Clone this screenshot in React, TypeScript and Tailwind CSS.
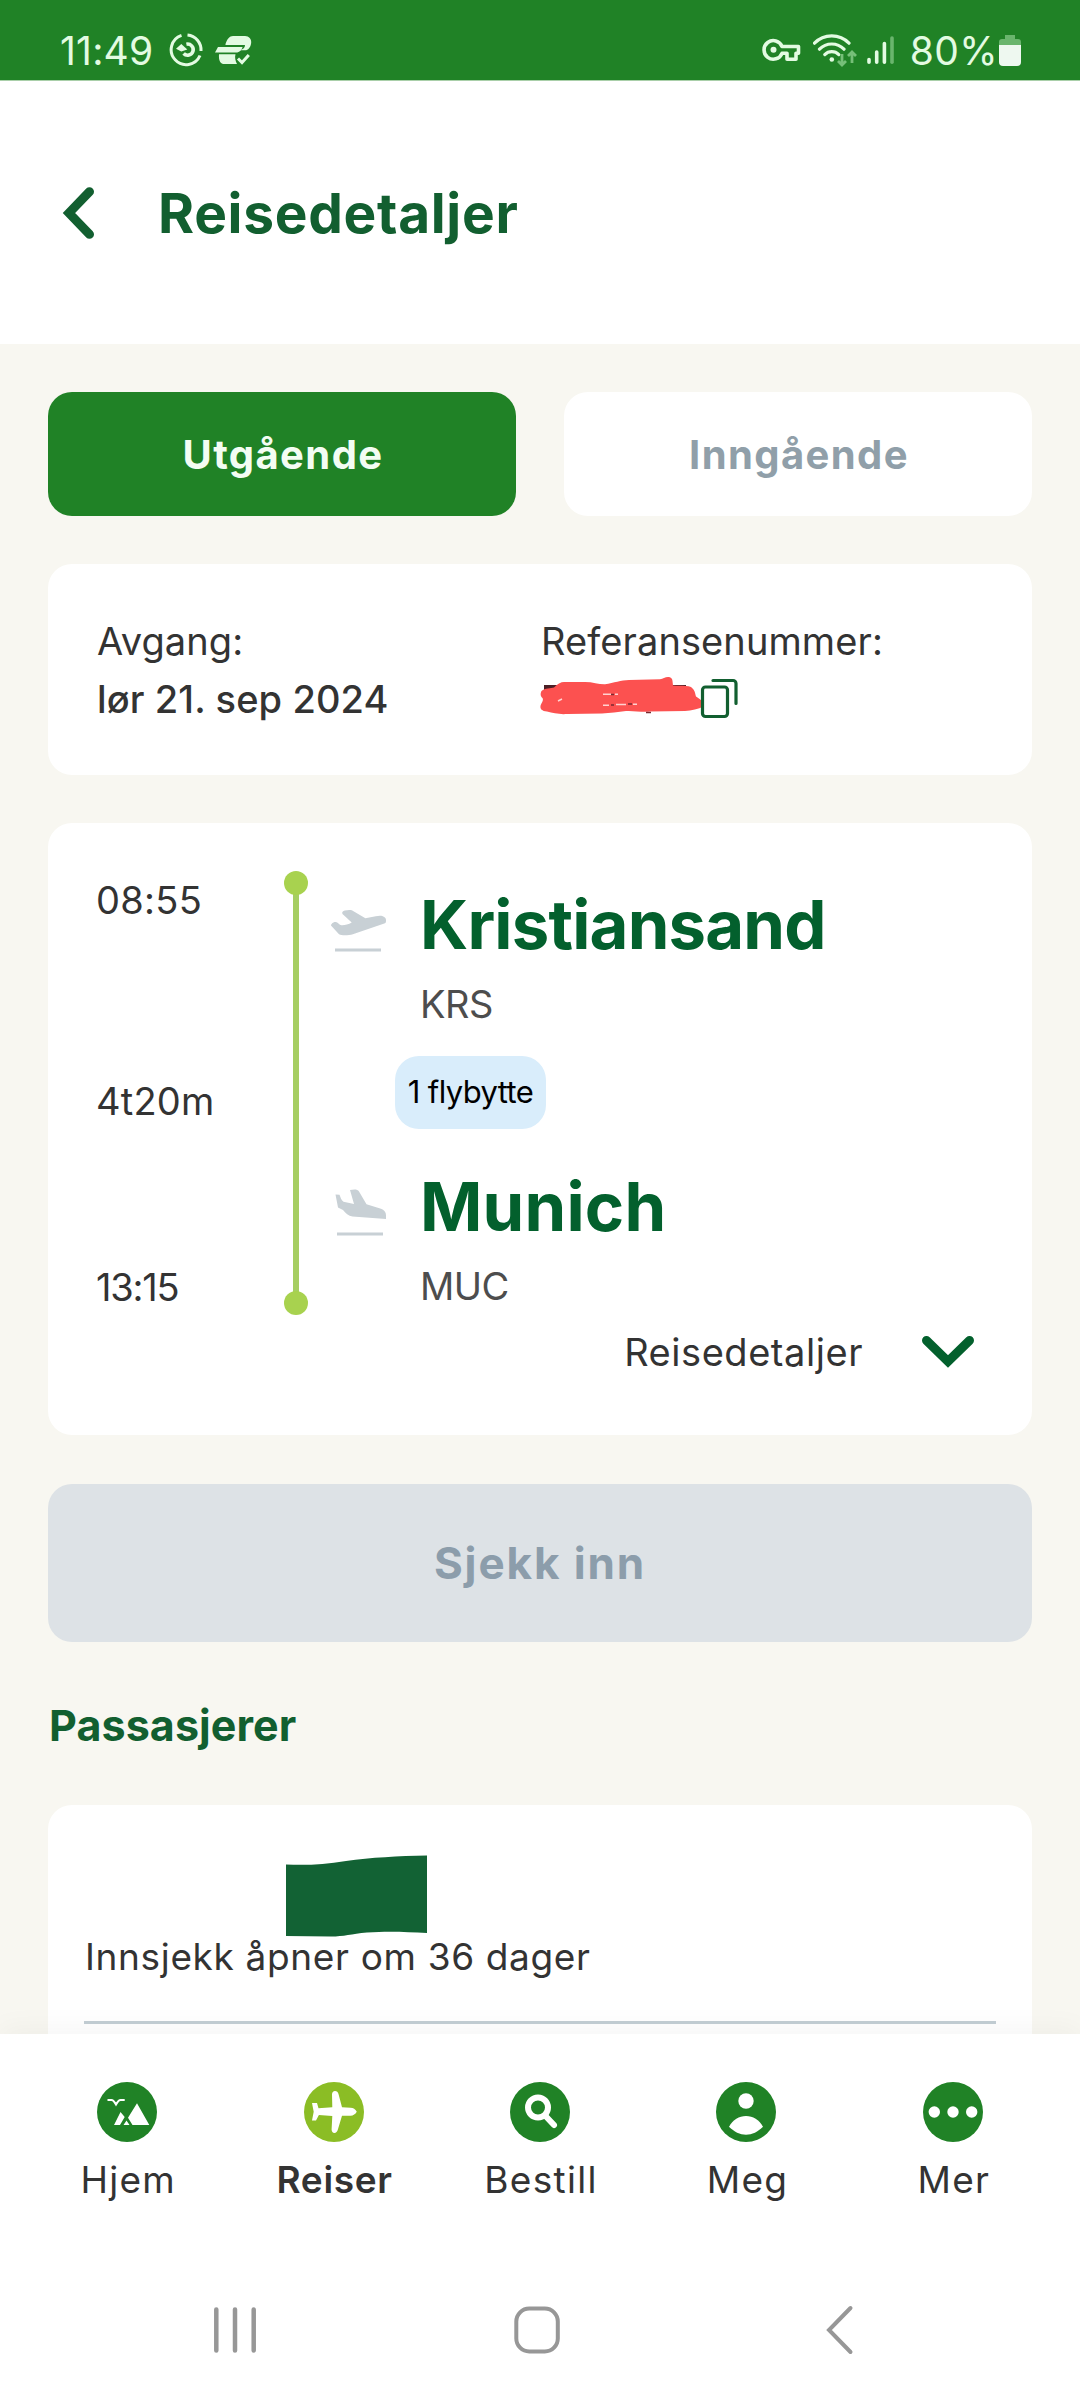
import type { ReactNode } from 'react';
import clsx from 'clsx';

function StatusBar() {
  return (
    <div className="h-20 shrink-0 bg-[#208226] pt-5 pl-[60px] pr-[59px] flex items-center text-[#e3fbe2]">
      <span className="w-[109px] text-[39px] leading-none tracking-[0.2px]">11:49</span>
      <svg width="34" height="34" viewBox="0 0 34 34" fill="none" stroke="currentColor" strokeWidth="3">
        <path d="M12.5 2.4A15 15 0 1 0 31 22.5" />
        <path d="M18.5 2A15 15 0 0 1 32 18" />
        <path d="M14.6 20.6A5.6 5.6 0 1 0 17.4 11.2" strokeWidth="3.6" />
        <path d="M7 15.8L12.3 11l6 5.6-6 1.8z" fill="currentColor" stroke="none" />
      </svg>
      <svg className="ml-3" width="37" height="30" viewBox="0 0 37 30" fill="currentColor">
        <path d="M10.5 9C12 4 14.5 1 18 1h12c4 0 6.500 3 6.200 6.500-.2 3.500-2 6.800-5 7.800H25c3.500-1 5-3 5-5.300H10.500z" />
        <path d="M3 12h24.500c-.5 3-3 5.400-6.500 5.600H0z" />
        <path d="M4 19.200h16.500c-1 3 0 7 1.500 9.800H9.500C5.500 29 3.500 26 4 19.200z" />
        <path d="M23 23.500l4 4 6.800-7.500" fill="none" stroke="currentColor" strokeWidth="3" />
      </svg>

      <svg className="ml-auto" width="39" height="24" viewBox="0 0 39 24" fill="none" stroke="currentColor" strokeWidth="3.6">
        <path d="M20 8.500h16.500v6.800h-2.500v6h-9v-6H20A9.300 9.300 0 1 1 20 8.500z" strokeLinejoin="round" />
        <circle cx="11.5" cy="11.8" r="3" fill="currentColor" stroke="none" />
      </svg>
      <svg className="ml-3" width="45" height="34" viewBox="0 0 45 34" fill="none" stroke="currentColor" strokeWidth="3.2">
        <path d="M1.500 10.200a24 24 0 0 1 34.500 0M6.500 16.200a17 17 0 0 1 24.500 0M11.800 21.600a9.800 9.800 0 0 1 14 0" strokeLinecap="round" />
        <circle cx="18.8" cy="26.5" r="2.3" fill="currentColor" stroke="none" />
        <path d="M29 21v11M25 28l4 4 4-4M39 30V19M35 23l4-4 4 4" stroke="#76bf78" strokeWidth="2.8" />
      </svg>
      <svg className="ml-2" width="29" height="30" viewBox="0 0 29 30" fill="none" stroke="currentColor" strokeWidth="3.6" strokeLinecap="round">
        <path d="M3 24.500v2.700M10.700 17v10.200M18.400 8.500v18.700" />
        <path d="M26 3v24.200" stroke="#6ab56d" />
      </svg>
      <span className="ml-[15px] text-[39px] leading-none tracking-[0.4px]">80%</span>
      <svg className="ml-px" width="22" height="32" viewBox="0 0 22 32">
        <path d="M6 1h10v4h3a3 3 0 0 1 3 3v6H0V8a3 3 0 0 1 3-3h3z" fill="#6ab56d" />
        <path d="M0 11h22v17a4 4 0 0 1-4 4H4a4 4 0 0 1-4-4z" fill="#eef8f0" />
      </svg>
    </div>
  );
}

function Header() {
  return (
    <header className="h-66 shrink-0 bg-white border-t border-[#a9cfa9] pl-[62px] flex items-center">
      <svg width="33" height="52" viewBox="0 0 33 52" fill="none" stroke="#125f30" strokeWidth="9" strokeLinecap="round">
        <path d="M27.5 4.700L7 26l20.500 21.300" />
      </svg>
      <h1 className="ml-[63px] pt-0.5 text-[55px] leading-none font-bold tracking-[0.7px] text-[#125f30]">Reisedetaljer</h1>
    </header>
  );
}

function InfoCard() {
  return (
    <section className="mt-12 h-[211px] rounded-3xl bg-white pl-[49px] pr-[47px] pt-12 grid grid-cols-2 content-start text-[38px] leading-[58px] text-[#333]">
      <div>
        <div className="tracking-[0.1px]">Avgang:</div>
        <div className="font-medium tracking-[0.1px]">lør 21. sep 2024</div>
      </div>
      <div>
        <div className="tracking-[0.1px]">Referansenummer:</div>
        <div className="h-[56px] flex items-center">
          <svg className="-ml-0.5" width="200" height="44" viewBox="0 0 200 44" fill="none">
            <path d="M5 9h13v5H5zM134 9h13v4h-13z" fill="#4a1f26" />
            <path
              d="M2.500 15C6 12 12 12.500 15 11.500 18 8 22 6 25 6h21c8 0 14 2.500 20 2.300C75 7 82 4 90 4l31-.7c3-.3 5-2.300 8-2.300 3.500 0 4.500 2.500 4.500 4l.5 4.500c6 .5 14-.5 18 1.500 4 3 4 6 5 9.500 3 2 6 4 7.500 6.500v3.500c-5 2.500-12 4-18.500 4.500l-35 .5c-8 1-16-1-24-.5-8 1-16 2-24 2.500l-34.500.5c-8 .5-14-.5-20.500-2.400C3 35 1 33 1.500 30 2 27 5 25 3.500 22 1 20 1.500 17 2.500 15z"
              fill="#fc5150"
            />
            <path d="M64 18.300h8M76 18.300h3M64 29.300h6M77 28.500h10M94 28.300h4M19 25l4-2" stroke="#ffd2d0" strokeWidth="1.5" />
            <path d="M72 18.500h3M72 29h3M89 28h4M107 36.500h5" stroke="#7a2a30" strokeWidth="1.5" />
            <rect x="163.500" y="11" width="25" height="29.500" rx="3" stroke="#125f30" strokeWidth="3.2" />
            <path d="M174 4.500h20a3 3 0 0 1 3 3V27.500" stroke="#125f30" strokeWidth="3.2" strokeLinecap="round" />
          </svg>
        </div>
      </div>
    </section>
  );
}

function Stop({ city, code, icon, className }: { city: string; code: string; icon: ReactNode; className?: string }) {
  return (
    <div>
      <div className="h-18 flex items-center">
        {icon}
        <h2 className={clsx('ml-[31px] text-[67px] leading-none font-bold text-[#03602d]', className)}>{city}</h2>
      </div>
      <div className="mt-5 pl-[89px] text-[38px] leading-12 tracking-[-0.5px] text-[#4d4d4d]">{code}</div>
    </div>
  );
}

function TripCard() {
  return (
    <section className="mt-12 h-[612px] rounded-3xl bg-white px-12 pt-12">
      <div className="flex items-start">
        <div className="w-[188px] pt-[5px] text-[38px] leading-12 text-[#333]">
          <div className="tracking-[0.3px]">08:55</div>
          <div className="mt-[153px] tracking-[0.2px]">4t20m</div>
          <div className="mt-[138px] tracking-[-1.2px]">13:15</div>
        </div>
        <svg width="24" height="444" viewBox="0 0 24 444">
          <path d="M12 12v420" stroke="#a6ce62" strokeWidth="6" />
          <circle cx="12" cy="12" r="12" fill="#a8d24f" />
          <circle cx="12" cy="432" r="12" fill="#a8d24f" />
        </svg>
        <div className="ml-[23px] pt-[17px]">
          <Stop
            city="Kristiansand"
            code="KRS"
            className="tracking-[-0.8px]"
            icon={
              <svg className="mt-3.5" width="58" height="44" viewBox="0 0 58 44">
                <path
                  d="M0 16.500c0-2 3-4 5-3.500 2.500.5 3 3 5.500 3.300 3 .2 7-1 10.200-2.800L11.500 5c-1-1.500.5-3 2.300-3.400 2.500-.6 4.500-.8 7-.4L34.400 9.200l10.400-2c3-.6 5-.7 7 0 2 .8 3.200 2 3.200 3.800 0 1.600 0 2.700-1 3.300L24 24.500c-3 1-5 1.600-8 1.700-3.500.1-6 .1-8-1z"
                  fill="#c8d0d5"
                />
                <path d="M4 41h46" stroke="#c8d0d5" strokeWidth="3" />
              </svg>
            }
          />
          <div className="mt-7 mb-[41px] ml-16 w-[151px] h-[73px] rounded-3xl bg-[#d9edfb] flex items-center justify-center text-[31px] tracking-[-0.6px] text-black">
            1 flybytte
          </div>
          <Stop
            city="Munich"
            code="MUC"
            className="tracking-[0.2px]"
            icon={
              <svg className="mt-3" width="58" height="50" viewBox="0 0 58 50">
                <path
                  d="M4.500 7.500l4 .3c1 2.500 1.500 5 4 7l10.500 2.300-4-14 4.500-.5c2 0 3.500.6 4.500 2l7.500 12.600 14.500 4.600c3 1 5 3.500 5 6.500V32l-33.500-2.600c-4-.5-7-3-9.500-6.400l-5-2.500z"
                  fill="#c8d0d5"
                />
                <path d="M6 47h46" stroke="#c8d0d5" strokeWidth="3" />
              </svg>
            }
          />
        </div>
      </div>
      <div className="mt-[13px] pr-[10px] flex items-center justify-end">
        <span className="text-[38px] leading-12 tracking-[0.55px] text-[#333]">Reisedetaljer</span>
        <svg className="ml-[59px]" width="52" height="32" viewBox="0 0 52 32" fill="none" stroke="#03602d" strokeWidth="9" strokeLinecap="round">
          <path d="M4.500 4.500L26 25.500 47.500 4.500" />
        </svg>
      </div>
    </section>
  );
}

function Passengers() {
  return (
    <section className="h-[300px] rounded-3xl bg-white px-9 pt-[50px]">
      <svg className="ml-[202px]" width="141" height="82" viewBox="0 0 141 82">
        <path d="M0 9.500c20 1 38 0 60-3.500C85 2.500 112 1 141 .5V78c-20-1-38-2-60-.5C65 79 58 81.500 45 81.500L0 81z" fill="#126234" />
      </svg>
      <p className="-mt-1 pl-px text-[37px] leading-12 tracking-[0.65px] text-[#333]">Innsjekk åpner om 36 dager</p>
      <div className="mt-10 h-[3px] bg-[#c3ced4]" />
    </section>
  );
}

const tabs: { label: string; spacing: string; active?: boolean; icon: ReactNode }[] = [
  {
    label: 'Hjem',
    spacing: 'tracking-[1.2px]',
    icon: (
      <>
        <path d="M10.500 18h4c2 0 3 2 4.500 4.500 1.500-2.500 2.500-4.500 4.500-4.500h4.200" stroke="#fff" strokeWidth="2" fill="none" />
        <path d="M40 21.300L52.300 43H35.500L31 35.700zM23.500 30l4.200 5L23 43h-6zM29.500 38.500L32.500 43h-6z" />
      </>
    ),
  },
  {
    label: 'Reiser',
    spacing: 'tracking-[0.7px]',
    active: true,
    icon: (
      <path d="M52.800 29.700c-1.500 2.500-3.500 3.800-6.200 4H38l-4.200 14c-.5 2-1.700 3.200-3.400 3.200s-2.800-1.400-2.800-3.400L28.300 34l-13.400-1-2.900 5.500H8l1.700-8.800L8 21h5l1.500 5.300 13.800-1L28 12.500c0-2 1.200-3.400 3-3.400s3 1.200 3.500 3L38 25.300l8.600.5c2.700.2 4.700 1.400 6.200 3.900z" />
    ),
  },
  {
    label: 'Bestill',
    spacing: 'tracking-[1.3px]',
    icon: (
      <g fill="none" stroke="#fff">
        <circle cx="28" cy="25.5" r="10" strokeWidth="6" />
        <path d="M35.500 34l8.500 9" strokeWidth="6" strokeLinecap="round" />
      </g>
    ),
  },
  {
    label: 'Meg',
    spacing: 'tracking-[1.2px]',
    icon: (
      <>
        <circle cx="30" cy="19" r="7.7" />
        <path d="M13 44.700C17 37.500 23 34 30 34s13 3.500 17 10.700c-5 5-11 8-17 8s-12-3-17-8z" />
      </>
    ),
  },
  {
    label: 'Mer',
    spacing: 'tracking-[1.2px]',
    icon: (
      <>
        <circle cx="11.3" cy="30" r="5.7" />
        <circle cx="30" cy="30" r="5.7" />
        <circle cx="48.7" cy="30" r="5.7" />
      </>
    ),
  },
];

function BottomNav() {
  return (
    <nav className="relative h-[366px] shrink-0 bg-white shadow-[0_-6px_26px_rgba(0,0,0,0.04)]">
      <div className="px-6 pt-12 flex">
        {tabs.map(({ label, spacing, active, icon }) => (
          <div key={label} className="flex-1 flex flex-col items-center">
            <svg width="60" height="60" viewBox="0 0 60 60" fill="#fff">
              <circle cx="30" cy="30" r="30" fill={active ? '#8bbd25' : '#208226'} />
              {icon}
            </svg>
            <span className={clsx('mt-[14px] pl-0.5 text-[37px] leading-12 text-[#333]', spacing, active && 'font-semibold')}>{label}</span>
          </div>
        ))}
      </div>
      <div className="mt-[101px] pl-[214px] flex items-center">
        <svg width="42" height="48" viewBox="0 0 42 48" stroke="#979797" strokeWidth="4.5" strokeLinecap="round">
          <path d="M2.300 3.500v41M21 3.500v41M39.700 3.500v41" />
        </svg>
        <svg className="ml-[258px]" width="46" height="48" viewBox="0 0 46 48" fill="none" stroke="#979797" strokeWidth="4">
          <rect x="2.3" y="2.5" width="41.500" height="43" rx="13" />
        </svg>
        <svg className="ml-[266px]" width="28" height="50" viewBox="0 0 28 50" fill="none" stroke="#979797" strokeWidth="4" strokeLinecap="round">
          <path d="M24.500 3L3 25l21.500 22" />
        </svg>
      </div>
    </nav>
  );
}

export default function App() {
  return (
    <div className="w-[1080px] h-[2400px] flex flex-col overflow-hidden bg-[#f8f7f1] font-[Inter,sans-serif]">
      <StatusBar />
      <Header />
      <main className="flex-1 min-h-0 overflow-hidden px-12 pt-12">
        <div className="flex gap-12 text-[40px] font-bold tracking-[1.4px]">
          <button className="flex-1 h-[124px] rounded-3xl bg-[#208226] pl-0.5 pt-0.5 text-[#f3fdf3]">Utgående</button>
          <button className="flex-1 h-[124px] rounded-3xl bg-white pl-0.5 pt-0.5 text-[#909fa9]">Inngående</button>
        </div>
        <InfoCard />
        <TripCard />
        <button className="mt-[49px] w-full h-[158px] rounded-3xl bg-[#dde2e6] text-[44px] font-bold tracking-[1.9px] text-[#8c9dab]">
          Sjekk inn
        </button>
        <h3 className="mt-[53px] mb-[50px] pl-px text-[43px] leading-[60px] font-bold tracking-[0.1px] text-[#125f30]">Passasjerer</h3>
        <Passengers />
      </main>
      <BottomNav />
    </div>
  );
}
